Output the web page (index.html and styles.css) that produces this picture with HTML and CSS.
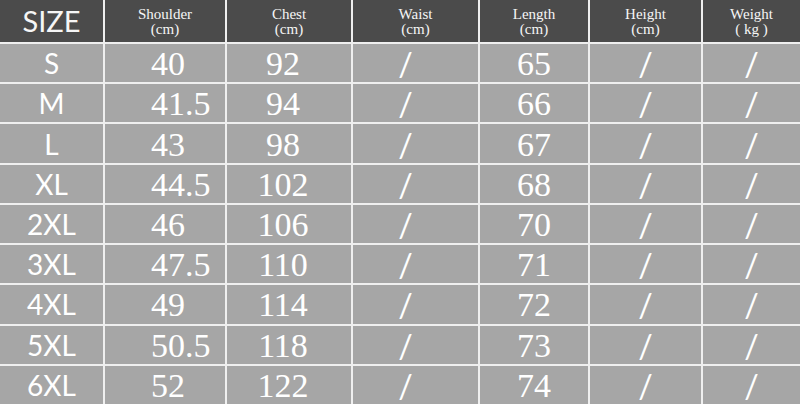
FILE: index.html
```html
<!DOCTYPE html>
<html>
<head>
<meta charset="utf-8">
<link rel="stylesheet" href="styles.css">
</head>
<body>
<div class="chart">
  <div class="hd size-hd">SIZE</div>
  <div class="hd">Shoulder<br>(cm)</div>
  <div class="hd">Chest<br>(cm)</div>
  <div class="hd">Waist<br>(cm)</div>
  <div class="hd">Length<br>(cm)</div>
  <div class="hd">Height<br>(cm)</div>
  <div class="hd">Weight<br>( kg )</div>

  <div class="c sz">S</div><div class="c num sh">40</div><div class="c num ch">92</div><div class="c sl wa">/</div><div class="c num">65</div><div class="c sl">/</div><div class="c sl">/</div>
  <div class="c sz">M</div><div class="c num sh">41.5</div><div class="c num ch">94</div><div class="c sl wa">/</div><div class="c num">66</div><div class="c sl">/</div><div class="c sl">/</div>
  <div class="c sz">L</div><div class="c num sh">43</div><div class="c num ch">98</div><div class="c sl wa">/</div><div class="c num">67</div><div class="c sl">/</div><div class="c sl">/</div>
  <div class="c sz">XL</div><div class="c num sh">44.5</div><div class="c num ch">102</div><div class="c sl wa">/</div><div class="c num">68</div><div class="c sl">/</div><div class="c sl">/</div>
  <div class="c sz">2XL</div><div class="c num sh">46</div><div class="c num ch">106</div><div class="c sl wa">/</div><div class="c num">70</div><div class="c sl">/</div><div class="c sl">/</div>
  <div class="c sz">3XL</div><div class="c num sh">47.5</div><div class="c num ch">110</div><div class="c sl wa">/</div><div class="c num">71</div><div class="c sl">/</div><div class="c sl">/</div>
  <div class="c sz">4XL</div><div class="c num sh">49</div><div class="c num ch">114</div><div class="c sl wa">/</div><div class="c num">72</div><div class="c sl">/</div><div class="c sl">/</div>
  <div class="c sz">5XL</div><div class="c num sh">50.5</div><div class="c num ch">118</div><div class="c sl wa">/</div><div class="c num">73</div><div class="c sl">/</div><div class="c sl">/</div>
  <div class="c sz">6XL</div><div class="c num sh">52</div><div class="c num ch">122</div><div class="c sl wa">/</div><div class="c num">74</div><div class="c sl">/</div><div class="c sl">/</div>
</div>
</body>
</html>
```
FILE: styles.css
```css
html, body {
  margin: 0;
  padding: 0;
  background: #f2f2f2;
}
.chart {
  width: 800px;
  height: 404px;
  display: grid;
  grid-template-columns: 103px 120px 124px 125px 108px 111px 97px;
  grid-template-rows: 42px repeat(9, minmax(0, 1fr));
  gap: 2px;
  background: #efefef;
  overflow: hidden;
}
.hd {
  background: #4b4b4b;
  color: #f6f6f6;
  font-family: "Liberation Serif", "DejaVu Serif", serif;
  font-size: 15px;
  line-height: 15px;
  text-align: center;
  display: flex;
  align-items: center;
  justify-content: center;
  padding-top: 2px;
  min-height: 0;
}
.size-hd {
  font-family: Lato, "Open Sans", sans-serif;
  font-size: 29px;
  line-height: 1;
  padding-top: 0;
  padding-bottom: 2px;
}
.c {
  background: #a6a6a6;
  color: #ffffff;
  display: flex;
  align-items: center;
  justify-content: center;
  line-height: 1;
  min-height: 0;
  overflow: hidden;
}
.sz {
  font-family: Lato, "Open Sans", sans-serif;
  font-size: 28px;
}
.num {
  font-family: "Liberation Serif", "DejaVu Serif", serif;
  font-size: 34px;
  padding-top: 2px;
}
.sh {
  justify-content: flex-start;
  padding-left: 46px;
}
.ch {
  padding-right: 12px;
}
.sl {
  font-family: Lato, "Open Sans", sans-serif;
  font-weight: 400;
  font-size: 32px;
  padding-top: 2px;
}
.wa {
  padding-right: 20px;
}
```
